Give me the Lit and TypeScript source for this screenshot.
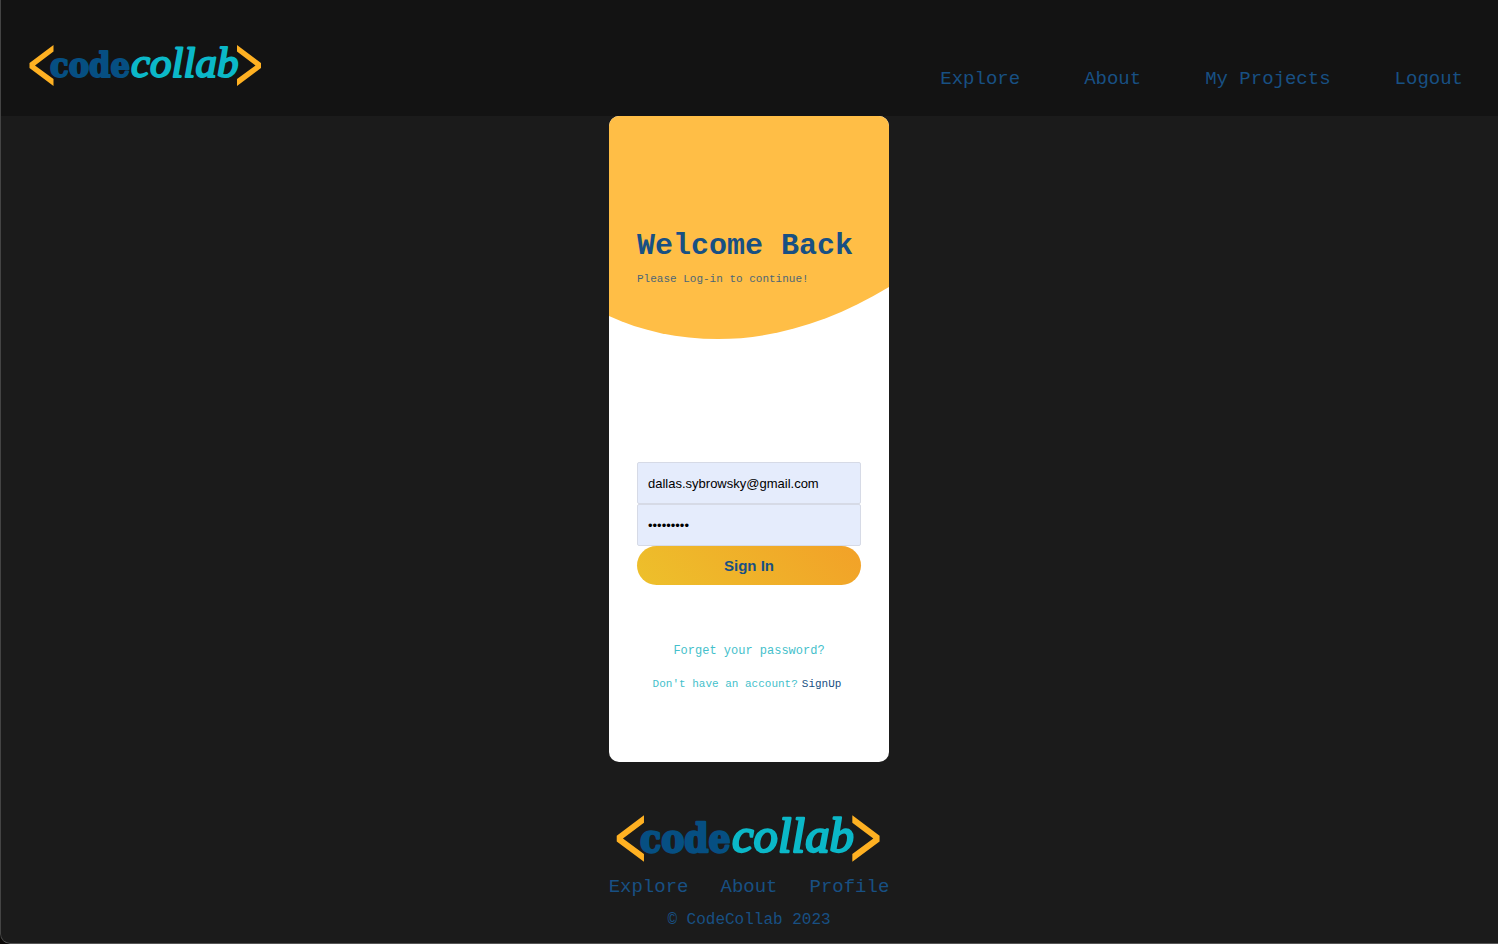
import { LitElement, html, css } from "lit";
import { customElement } from "lit/decorators.js";

/** Wordmark shared by the header and the footer; fills the width of its host. */
@customElement("code-collab-logo")
export class CodeCollabLogo extends LitElement {
  static styles = css`
    :host {
      display: block;
    }
    .logo {
      display: block;
      width: 100%;
      height: auto;
      overflow: visible;
    }
    .bracket {
      fill: #ffb122;
    }
    .code {
      font: bold 34px "DejaVu Serif Condensed", "DejaVu Serif", serif;
      font-stretch: condensed;
      fill: #064f82;
      stroke: #064f82;
      stroke-width: 2;
      stroke-linejoin: round;
    }
    .collab {
      font: italic 43px "Liberation Serif", serif;
      fill: #0bb8c8;
      stroke: #0bb8c8;
      stroke-width: 2;
      stroke-linejoin: round;
    }
  `;

  render() {
    return html`
      <svg class="logo" viewBox="0 0 236 60" role="img" aria-label="CodeCollab">
        <polygon class="bracket" points="25.5,17 25.5,23.5 7,37.5 25.5,51 25.5,58 1.5,40 1.5,35" />
        <text class="code" x="22" y="49">code</text>
        <text class="collab" x="103" y="49">collab</text>
        <polygon class="bracket" points="209,17 209,23.5 227.5,37.5 209,51 209,58 233,40 233,35" />
      </svg>
    `;
  }
}

@customElement("site-header")
export class SiteHeader extends LitElement {
  static styles = css`
    :host {
      display: block;
      background: #131313;
    }
    .bar {
      display: flex;
      justify-content: space-between;
      align-items: flex-end;
      flex-wrap: wrap;
      padding: 28px 35px 28px 28px;
    }
    .brand {
      display: block;
      width: 236px;
    }
    .nav {
      display: flex;
      flex-wrap: wrap;
      gap: 64px;
    }
    .link {
      color: #185083;
      font-size: 19px;
      line-height: 18px;
      text-decoration: none;
    }
  `;

  private links = ["Explore", "About", "My Projects", "Logout"];

  render() {
    return html`
      <header class="bar">
        <a class="brand" href="#"><code-collab-logo></code-collab-logo></a>
        <nav class="nav">
          ${this.links.map((label) => html`<a class="link" href="#">${label}</a>`)}
        </nav>
      </header>
    `;
  }
}

@customElement("login-card")
export class LoginCard extends LitElement {
  static styles = css`
    :host {
      display: block;
      width: 280px;
    }
    .card {
      position: relative;
      overflow: hidden;
      border-radius: 10px;
      background: #fff;
      padding: 112px 28px 70px;
    }
    .wave {
      position: absolute;
      top: 0;
      left: 0;
      width: 100%;
      fill: #ffbe46;
    }
    .intro {
      position: relative;
      color: #185083;
    }
    .title {
      margin: 0;
      font-size: 30px;
      line-height: 36px;
      white-space: nowrap;
    }
    .subtitle {
      margin: 8px 0 0;
      font-size: 11px;
      line-height: 14px;
      opacity: 0.8;
    }
    .form {
      display: flex;
      flex-direction: column;
      margin-top: 176px;
    }
    .field {
      box-sizing: border-box;
      width: 100%;
      height: 42px;
      margin: 0;
      padding: 10px;
      border: 1px solid #d6dae6;
      border-radius: 2px;
      background: #e5ecfc;
      color: #000;
      font: 13px "Liberation Sans", sans-serif;
      outline: none;
    }
    .submit {
      height: 39px;
      padding: 0;
      border: 0;
      border-radius: 20px;
      background: linear-gradient(45deg, #edc02b, #f2a128);
      color: #185083;
      font: bold 15px "Liberation Sans", sans-serif;
      cursor: pointer;
    }
    .help {
      display: flex;
      flex-direction: column;
      align-items: center;
      gap: 18px;
      margin-top: 59px;
      color: #45bfcb;
      white-space: nowrap;
    }
    .forgot {
      color: inherit;
      font-size: 12px;
      line-height: 15px;
      text-decoration: none;
    }
    .register {
      display: flex;
      gap: 4px;
      margin: 0 4px 0 0;
      font-size: 11px;
      line-height: 15px;
    }
    .signup {
      color: #185083;
      text-decoration: none;
    }
  `;

  render() {
    return html`
      <section class="card">
        <svg class="wave" viewBox="0 0 280 224" aria-hidden="true">
          <path d="M0 0H280V171C224 205 166 223 109 223C70 223 32 215 0 200Z" />
        </svg>
        <div class="intro">
          <h1 class="title">Welcome Back</h1>
          <p class="subtitle">Please Log-in to continue!</p>
        </div>
        <form class="form" @submit=${(e: Event) => e.preventDefault()}>
          <input
            class="field"
            type="email"
            aria-label="Email"
            autocomplete="email"
            .value=${"dallas.sybrowsky@gmail.com"}
          />
          <input
            class="field"
            type="password"
            aria-label="Password"
            autocomplete="current-password"
            .value=${"password1"}
          />
          <button class="submit" type="submit">Sign In</button>
        </form>
        <div class="help">
          <a class="forgot" href="#">Forget your password?</a>
          <p class="register">
            <span>Don't have an account?</span>
            <a class="signup" href="#">SignUp</a>
          </p>
        </div>
      </section>
    `;
  }
}

@customElement("site-footer")
export class SiteFooter extends LitElement {
  static styles = css`
    :host {
      display: block;
    }
    .footer {
      display: flex;
      flex-direction: column;
      align-items: center;
      padding: 34px 0 13px;
      color: #185083;
    }
    .brand {
      width: 268px;
    }
    .nav {
      display: flex;
      gap: 32px;
      margin-top: 13px;
    }
    .link {
      color: inherit;
      font-size: 19px;
      line-height: 20px;
      text-decoration: none;
    }
    .legal {
      margin: 13px 0 0;
      font-size: 16px;
      line-height: 20px;
    }
  `;

  private links = ["Explore", "About", "Profile"];

  render() {
    return html`
      <footer class="footer">
        <code-collab-logo class="brand"></code-collab-logo>
        <nav class="nav">
          ${this.links.map((label) => html`<a class="link" href="#">${label}</a>`)}
        </nav>
        <p class="legal">© CodeCollab 2023</p>
      </footer>
    `;
  }
}

@customElement("app-root")
export class AppRoot extends LitElement {
  static styles = css`
    :host {
      display: block;
      background: #0a0806;
      font-family: "Liberation Mono", monospace;
    }
    .page {
      position: relative;
      display: flex;
      flex-direction: column;
      box-sizing: border-box;
      min-height: 100vh;
      overflow: hidden;
      border-bottom-left-radius: 10px;
      background: #1b1b1b;
    }
    .page::after {
      content: "";
      position: absolute;
      inset: 0;
      border-left: 1px solid #444;
      border-bottom: 1px solid #555;
      border-bottom-left-radius: 10px;
      pointer-events: none;
    }
    .main {
      display: flex;
      justify-content: center;
    }
  `;

  render() {
    return html`
      <div class="page">
        <site-header></site-header>
        <main class="main"><login-card></login-card></main>
        <site-footer></site-footer>
      </div>
    `;
  }
}
